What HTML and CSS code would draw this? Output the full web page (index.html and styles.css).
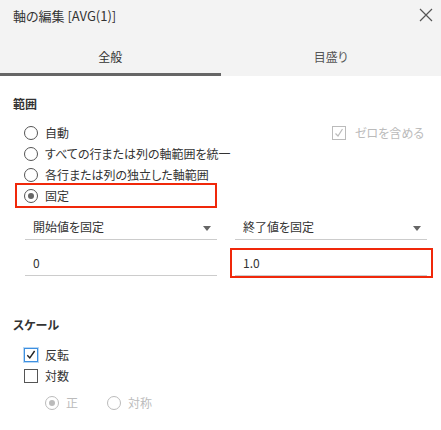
FILE: index.html
```html
<!DOCTYPE html>
<html lang="ja">
<head>
  <meta charset="UTF-8">
  <title>軸の編集</title>
  <link rel="stylesheet" href="styles.css">
</head>
<body>

  <div class="dialog-head">
    <div class="title-row">
      <span class="title">軸の編集 [AVG(1)]</span>
      <svg class="close" width="14" height="14" viewBox="0 0 14 14">
        <path d="M1 1 L13 13 M13 1 L1 13" stroke="#555" stroke-width="1.2" fill="none"/>
      </svg>
    </div>
    <div class="tabs">
      <div class="tab active">全般</div>
      <div class="tab">目盛り</div>
    </div>
  </div>

  <div class="content">
    <div class="section-title">範囲</div>

    <div class="options">
      <div class="row">
        <span class="radio"></span>
        <span>自動</span>
        <span class="zero disabled">
          <span class="check dim">
            <svg width="12" height="12" viewBox="0 0 12 12"><path d="M2.5 6.5 L5 9 L9.5 2" stroke="#bbb" stroke-width="1.2" fill="none"/></svg>
          </span>
          ゼロを含める
        </span>
      </div>
      <div class="row">
        <span class="radio"></span>
        <span>すべての行または列の軸範囲を統一</span>
      </div>
      <div class="row">
        <span class="radio"></span>
        <span>各行または列の独立した軸範囲</span>
      </div>
      <div class="row marked">
        <span class="radio on"></span>
        <span>固定</span>
      </div>
    </div>

    <div class="pair">
      <div class="select">
        <span>開始値を固定</span>
        <span class="arrow"></span>
      </div>
      <div class="select">
        <span>終了値を固定</span>
        <span class="arrow"></span>
      </div>
    </div>

    <div class="pair inputs">
      <div class="field">0</div>
      <div class="field marked-field">1.0</div>
    </div>

    <div class="section-title scale-title">スケール</div>

    <div class="options">
      <div class="row">
        <span class="check focus">
          <svg width="12" height="12" viewBox="0 0 12 12"><path d="M2.3 6.3 L4.8 9 L9.6 2" stroke="#222" stroke-width="1.4" fill="none"/></svg>
        </span>
        <span>反転</span>
      </div>
      <div class="row">
        <span class="check"></span>
        <span>対数</span>
      </div>
      <div class="row sub disabled">
        <span class="radio dim on"></span>
        <span class="sub-label">正</span>
        <span class="radio dim"></span>
        <span>対称</span>
      </div>
    </div>
  </div>

</body>
</html>
```

FILE: styles.css
```css
body {
  margin: 0;
  font-family: "Noto Sans CJK JP", "Noto Sans", sans-serif;
  font-size: 12px;
  font-feature-settings: "palt";
  color: #333;
  background: #fff;
}

.dialog-head {
  background: #f3f3f3;
}

.title-row {
  height: 30px;
  display: flex;
  align-items: center;
  justify-content: space-between;
  padding: 0 8px 0 13px;
}

.title {
  font-size: 13px;
}

.close {
  display: block;
}

.tabs {
  display: flex;
}

.tab {
  flex: 1;
  text-align: center;
  line-height: 18px;
  padding: 18px 0 7px;
  border-bottom: 3px solid transparent;
  color: #555;
}

.tab.active {
  border-bottom-color: #666;
  color: #333;
}

.content {
  padding: 19px 0 0;
}

.section-title {
  font-weight: bold;
  line-height: 18px;
  padding-left: 13px;
}

.options {
  margin-top: 9px;
  padding-left: 24px;
  padding-right: 17px;
}

.row {
  display: flex;
  align-items: center;
  height: 21px;
  position: relative;
}

.row > span + span {
  margin-left: 7px;
}

.radio {
  width: 14px;
  height: 14px;
  box-sizing: border-box;
  border: 1px solid #555;
  border-radius: 50%;
  display: flex;
  align-items: center;
  justify-content: center;
  flex: none;
}

.radio.on::after {
  content: "";
  width: 6px;
  height: 6px;
  border-radius: 50%;
  background: #666;
}

.check {
  width: 14px;
  height: 14px;
  box-sizing: border-box;
  border: 1px solid #555;
  display: flex;
  align-items: center;
  justify-content: center;
  flex: none;
}

.check.focus {
  border-color: #3d8fe0;
  box-shadow: 0 0 0 1px #b9d8f5;
}

.check.dim,
.radio.dim {
  border-color: #bbb;
}

.radio.dim.on::after {
  background: #bbb;
}

.disabled {
  color: #bbb;
}

.zero {
  margin-left: auto !important;
  display: flex;
  align-items: center;
  gap: 9px;
}

.marked::after {
  content: "";
  position: absolute;
  left: -9px;
  top: -2px;
  width: 198px;
  height: 21px;
  border: 2px solid #f0280a;
}

.pair {
  display: flex;
  gap: 18px;
  padding: 0 14px 0 25px;
  margin-top: 8px;
}

.select,
.field {
  flex: 1;
  height: 25px;
  line-height: 25px;
  padding: 0 8px;
  border-bottom: 1px solid #ccc;
  display: flex;
  align-items: center;
  justify-content: space-between;
  position: relative;
}

.arrow {
  width: 0;
  height: 0;
  border-left: 4px solid transparent;
  border-right: 4px solid transparent;
  border-top: 5px solid #666;
  margin-right: -2px;
  margin-top: 3px;
}

.inputs {
  margin-top: 10px;
}

.marked-field::after {
  content: "";
  position: absolute;
  left: -5px;
  right: -6px;
  top: -2px;
  bottom: -3px;
  border: 2px solid #f0280a;
}

.scale-title {
  margin-top: 40px;
}

.scale-title + .options {
  margin-top: 10px;
}

.row.sub {
  margin-top: 6px;
  padding-left: 21px;
}

.row.sub .sub-label {
  margin-right: 22px;
}
```
